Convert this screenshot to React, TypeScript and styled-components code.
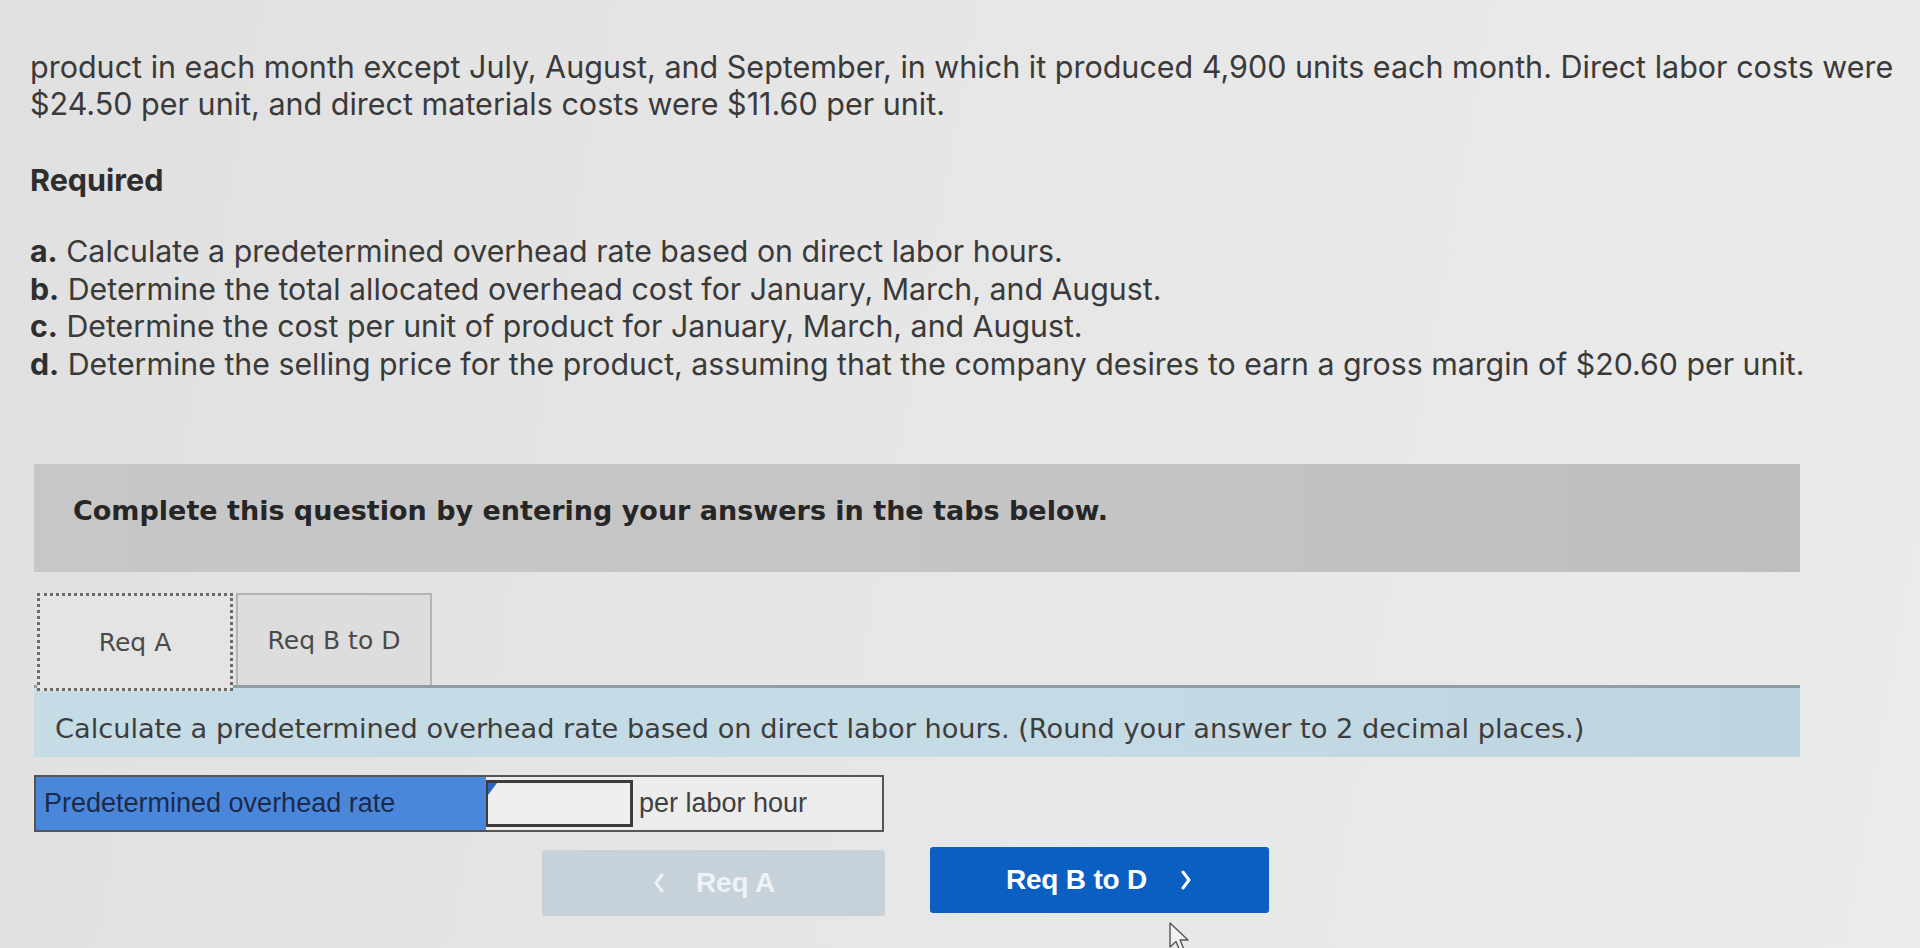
import React from "react";
import styled, { createGlobalStyle } from "styled-components";

const Global = createGlobalStyle`
  html, body { margin: 0; padding: 0; }
  body {
    background: linear-gradient(100deg, #e0e0e0 0%, #e6e6e6 45%, #ebebeb 100%);
    width: 1920px;
    height: 948px;
    overflow: hidden;
  }
`;

const Page = styled.div`
  position: relative;
  box-sizing: border-box;
  width: 1920px;
  height: 948px;
  padding: 48px 0 0 30px;
  font-family: Inter, "Liberation Sans", Arial, sans-serif;
  color: #3a3a3a;
`;

const Intro = styled.p`
  margin: 0;
  font-size: 30.5px;
  line-height: 37px;
  white-space: nowrap;
`;

const Heading = styled.h3`
  margin: 39px 0 0;
  font-size: 30.5px;
  line-height: 37px;
  font-weight: 700;
  color: #2e2e2e;
`;

const List = styled.ul`
  list-style: none;
  margin: 35px 0 0;
  padding: 0;
`;

const Item = styled.li`
  font-size: 30.3px;
  line-height: 37.5px;
  white-space: nowrap;
`;

const Letter = styled.b`
  font-weight: 700;
  color: #2e2e2e;
`;

const Banner = styled.div`
  box-sizing: border-box;
  margin: 81px 0 0 4px;
  width: 1766px;
  height: 108px;
  padding: 31px 0 0 39px;
  background: linear-gradient(90deg, #c7c7c7, #c4c4c4 60%, #bebebe);
  font-family: "DejaVu Sans", Verdana, sans-serif;
  font-weight: 700;
  font-size: 27px;
  color: #262626;
`;

const Tabs = styled.div`
  display: flex;
  gap: 3px;
  margin: 21px 0 0 7px;
  height: 92px;
  align-items: stretch;
`;

const Tab = styled.div<{ $active?: boolean }>`
  box-sizing: border-box;
  width: 196px;
  display: flex;
  align-items: center;
  justify-content: center;
  font-family: "DejaVu Sans", Verdana, sans-serif;
  font-size: 25px;
  color: #4a4a4a;
  background: ${(p) => (p.$active ? "#e4e4e4" : "#dddddd")};
  border: ${(p) => (p.$active ? "3px dotted #6b6b6b" : "2px solid #b4b4b4")};
  border-bottom: ${(p) => (p.$active ? "3px dotted #6b6b6b" : "none")};
  margin-bottom: ${(p) => (p.$active ? "-6px" : "0")};
  position: relative;
  z-index: 1;
`;

const Instruction = styled.div`
  box-sizing: border-box;
  margin-left: 4px;
  width: 1766px;
  height: 72px;
  padding: 25px 0 0 21px;
  background: linear-gradient(90deg, #c5dbe5, #c4dae4 60%, #bed5e0);
  border-top: 3px solid #8f9ea4;
  font-family: "DejaVu Sans", Verdana, sans-serif;
  font-size: 27.2px;
  line-height: 32px;
  color: #3d3d3d;
  white-space: nowrap;
`;

const AnswerRow = styled.div`
  display: flex;
  margin: 18px 0 0 4px;
  width: 850px;
  height: 57px;
  box-sizing: border-box;
  border: 2px solid #555;
  background: #ececec;
`;

const LabelCell = styled.div`
  box-sizing: border-box;
  width: 450px;
  display: flex;
  align-items: center;
  padding-left: 8px;
  background: #4a87da;
  color: #1d2a4a;
  font-family: "Liberation Sans", Arial, sans-serif;
  font-size: 27px;
`;

const InputCell = styled.div`
  position: relative;
  box-sizing: border-box;
  width: 147px;
  margin: 3px 0;
  border: 3px solid #3c3c3c;
  border-left-width: 2px;
  background: #efefef;
`;

const Flag = styled.span`
  position: absolute;
  left: 0;
  top: 0;
  width: 0;
  height: 0;
  border-top: 12px solid #2d66c0;
  border-right: 9px solid transparent;
`;

const UnitCell = styled.div`
  flex: 1;
  display: flex;
  align-items: center;
  padding-left: 6px;
  font-family: "Liberation Sans", Arial, sans-serif;
  font-size: 27px;
  color: #404040;
`;

const Buttons = styled.div`
  display: flex;
  gap: 45px;
  margin: 18px 0 0 512px;
  align-items: flex-start;
`;

const NavButton = styled.div<{ $primary?: boolean }>`
  box-sizing: border-box;
  width: ${(p) => (p.$primary ? "339px" : "343px")};
  height: 66px;
  margin-top: ${(p) => (p.$primary ? "-3px" : "0")};
  display: flex;
  align-items: center;
  justify-content: center;
  gap: ${(p) => (p.$primary ? "32px" : "30px")};
  border-radius: 3px;
  font-family: "Liberation Sans", Arial, sans-serif;
  font-weight: 700;
  font-size: 28px;
  letter-spacing: -0.2px;
  background: ${(p) => (p.$primary ? "#0b5ec2" : "#c6d1da")};
  color: ${(p) => (p.$primary ? "#ffffff" : "#eef2f6")};
`;

const Chevron = styled.svg`
  width: 14px;
  height: 22px;
  display: block;
`;

const Cursor = styled.svg`
  position: absolute;
  left: 1168px;
  top: 922px;
  width: 22px;
  height: 32px;
`;

export default function App() {
  return (
    <>
      <Global />
      <Page>
        <Intro>
          product in each month except July, August, and September, in which it produced 4,900 units each month. Direct labor costs were
          <br />
          $24.50 per unit, and direct materials costs were $11.60 per unit.
        </Intro>
        <Heading>Required</Heading>
        <List>
          <Item>
            <Letter>a.</Letter> Calculate a predetermined overhead rate based on direct labor hours.
          </Item>
          <Item>
            <Letter>b.</Letter> Determine the total allocated overhead cost for January, March, and August.
          </Item>
          <Item>
            <Letter>c.</Letter> Determine the cost per unit of product for January, March, and August.
          </Item>
          <Item>
            <Letter>d.</Letter> Determine the selling price for the product, assuming that the company desires to earn a gross margin of $20.60 per unit.
          </Item>
        </List>
        <Banner>Complete this question by entering your answers in the tabs below.</Banner>
        <Tabs>
          <Tab $active>Req A</Tab>
          <Tab>Req B to D</Tab>
        </Tabs>
        <Instruction>
          Calculate a predetermined overhead rate based on direct labor hours. (Round your answer to 2 decimal places.)
        </Instruction>
        <AnswerRow>
          <LabelCell>Predetermined overhead rate</LabelCell>
          <InputCell>
            <Flag />
          </InputCell>
          <UnitCell>per labor hour</UnitCell>
        </AnswerRow>
        <Buttons>
          <NavButton>
            <Chevron viewBox="0 0 14 22">
              <path d="M10 3 L4 11 L10 19" fill="none" stroke="currentColor" strokeWidth="3" strokeLinecap="round" strokeLinejoin="round" />
            </Chevron>
            <span>Req A</span>
          </NavButton>
          <NavButton $primary>
            <span>Req B to D</span>
            <Chevron viewBox="0 0 14 22">
              <path d="M4 3 L10 11 L4 19" fill="none" stroke="currentColor" strokeWidth="3" strokeLinecap="round" strokeLinejoin="round" />
            </Chevron>
          </NavButton>
        </Buttons>
        <Cursor viewBox="0 0 22 32">
          <path d="M2 1 L2 25 L8 19.5 L12 29 L16 27.3 L12 18 L20 18 Z" fill="#f2f2f2" stroke="#555" strokeWidth="1.4" strokeLinejoin="round" />
        </Cursor>
      </Page>
    </>
  );
}
